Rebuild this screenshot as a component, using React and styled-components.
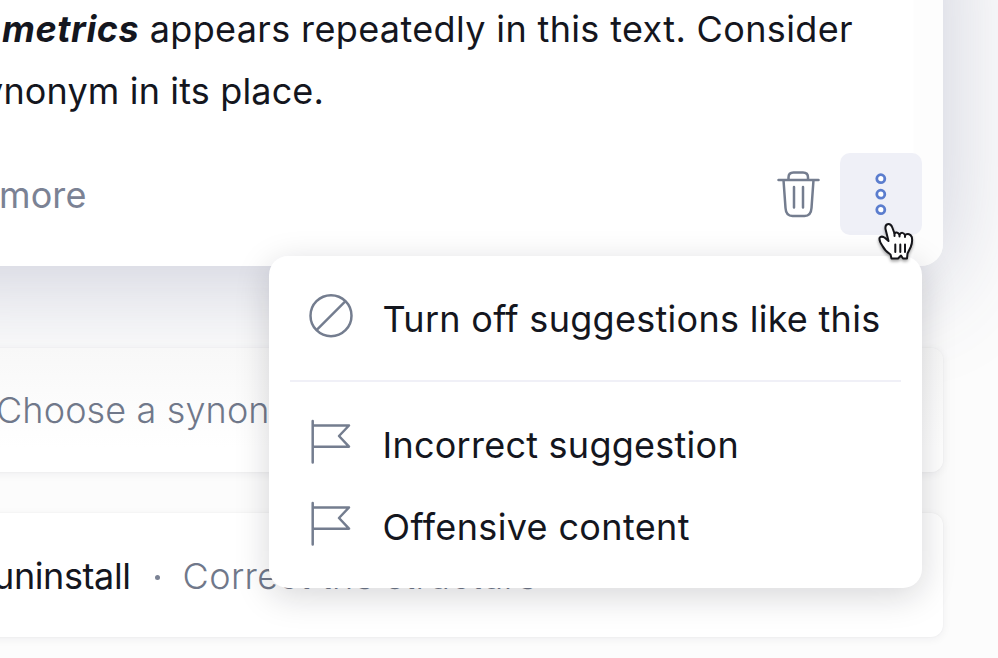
import React from "react";
import styled, { createGlobalStyle } from "styled-components";

const GlobalStyle = createGlobalStyle`
  * { box-sizing: border-box; }
  body { margin: 0; background: #fcfcfc; overflow: hidden; }
`;

const Page = styled.main`
  position: relative;
  width: 998px;
  height: 658px;
  overflow: hidden;
  background: #fcfcfc;
  font-family: Inter, "Liberation Sans", sans-serif;
  color: #14161e;
`;

/* The feed bleeds past the top and left of the window. */
const Feed = styled.div`
  display: flex;
  flex-direction: column;
  width: 1063px;
  margin: -120px 0 0 -120px;
`;

const SuggestionCard = styled.section`
  display: flex;
  flex-direction: column;
  height: 386px;
  padding: 120px 0 0 120px;
  background: linear-gradient(90deg, #fff 1033px, #fdfdfd 1034px);
  border-radius: 0 0 22px 0;
  box-shadow: 0 14px 108px rgba(60, 70, 118, 0.26);
`;

const Message = styled.p`
  display: flex;
  flex-direction: column;
  margin: 0;
  height: 153px;
`;

const Line = styled.span`
  display: block;
  height: 62px;
  line-height: 62px;
  margin-left: ${(p) => p.$shift}px;
  margin-top: ${(p) => p.$lift || 0}px;
  font-size: 36px;
  letter-spacing: ${(p) => p.$tracking}px;
  white-space: nowrap;
`;

const Word = styled.em`
  font-weight: 700;
  letter-spacing: ${(p) => p.$tracking}px;
`;

const Actions = styled.div`
  display: flex;
  align-items: center;
  height: 82px;
  padding-right: 21px;
`;

const MoreLink = styled.span`
  flex: 1;
  font-size: 36px;
  line-height: 44px;
  letter-spacing: 0.1px;
  margin-left: -1px;
  margin-top: 2px;
  color: #7b8294;
`;

const IconButton = styled.button`
  display: grid;
  place-items: center;
  width: 82px;
  height: 82px;
  padding: 0;
  border: 0;
  border-radius: 10px;
  background: ${(p) => (p.$active ? "#eff0f7" : "transparent")};
  color: ${(p) => (p.$active ? "#5b7dce" : "#747d8f")};
`;

const CollapsedCard = styled.section`
  display: flex;
  align-items: center;
  height: 124px;
  margin-top: ${(p) => p.$gap}px;
  padding: ${(p) => p.$drop || 0}px 0 0 120px;
  border-radius: 0 12px 12px 0;
  background: ${(p) => (p.$shaded ? "linear-gradient(#f8f8f8, #fff 80%)" : "#fff")};
  box-shadow: 0 2px 10px rgba(20, 24, 45, 0.06), 0 0 2px rgba(20, 24, 45, 0.05);
  font-size: 36px;
  white-space: nowrap;
`;

const Term = styled.span`
  margin-left: -7px;
  letter-spacing: -0.4px;
`;

const Dot = styled.span`
  width: 5px;
  height: 5px;
  margin: 2px 22px 0 24px;
  border-radius: 50%;
  background: #7b8294;
`;

const Hint = styled.span`
  margin-left: ${(p) => p.$shift || 0}px;
  font-weight: 300;
  letter-spacing: ${(p) => p.$tracking}px;
  color: #70788a;
`;

const Menu = styled.div`
  position: absolute;
  left: 269px;
  top: 256px;
  width: 653px;
  height: 332px;
  padding: 0 21px;
  border-radius: 19px;
  background: #fff;
  box-shadow: 0 8px 34px rgba(20, 20, 30, 0.17);
`;

const MenuItem = styled.div`
  display: flex;
  align-items: center;
  height: ${(p) => p.$height}px;
  padding-top: ${(p) => p.$drop || 0}px;
  padding-left: 18px;
  font-size: 36px;
  letter-spacing: ${(p) => p.$tracking}px;
  white-space: nowrap;

  svg { flex: none; margin-right: 28.5px; margin-top: -6px; }
`;

const Divider = styled.hr`
  width: 100%;
  height: 2px;
  margin: 0 0 22px;
  border: 0;
  background: #f0f0f7;
`;

const Pointer = styled.svg`
  position: absolute;
  left: 876px;
  top: 220px;
  filter: drop-shadow(0 2px 1.5px rgba(0, 0, 0, 0.35));
`;

const TrashIcon = () => (
  <svg width="46" height="50" viewBox="0 0 46 50" fill="none" stroke="currentColor" strokeWidth="2.5" strokeLinecap="round" strokeLinejoin="round">
    <path d="M2.500 11H42.500M12.500 11V8.500Q12.500 3.500 17.500 3.500H27Q32 3.500 32 8.500V11M7.500 11L9.500 39Q10 47 16.500 47H28.500Q35 47 35.500 39L37.500 11M18 18V38.500M27 18V38.500" />
  </svg>
);

const MoreIcon = () => (
  <svg width="14" height="44" viewBox="0 0 14 44" fill="#fff" stroke="currentColor" strokeWidth="2.8">
    <circle cx="6.800" cy="6.700" r="4" />
    <circle cx="6.800" cy="22.200" r="4" />
    <circle cx="6.800" cy="37.700" r="4" />
  </svg>
);

const BlockIcon = () => (
  <svg width="46" height="46" viewBox="0 0 46 46" fill="none" stroke="#747d8f" strokeWidth="2.5">
    <circle cx="23" cy="22.700" r="20.500" />
    <path d="M8.500 37.200L37.500 8.200" />
  </svg>
);

const FlagIcon = () => (
  <svg width="46" height="46" viewBox="0 0 46 46" fill="none" stroke="#747d8f" strokeWidth="2.500" strokeLinecap="round" strokeLinejoin="round">
    <path d="M4.700 2V43.500M4.700 6.500H41L31 17L41 27.700H4.700" />
  </svg>
);

export default function App() {
  return (
    <Page>
      <GlobalStyle />
      <Feed>
        <SuggestionCard>
          <Message>
            <Line $shift={2} $tracking={0.36} $lift={-2}>
              <Word $tracking={0.55}>metrics</Word> appears repeatedly in this text. Consider
            </Line>
            <Line $shift={-17} $tracking={0.15}>ynonym in its place.</Line>
          </Message>
          <Actions>
            <MoreLink>more</MoreLink>
            <IconButton aria-label="Dismiss"><TrashIcon /></IconButton>
            <IconButton $active aria-label="More options"><MoreIcon /></IconButton>
          </Actions>
        </SuggestionCard>
        <CollapsedCard $gap={82} $shaded>
          <Hint $shift={-4} $tracking={0.13}>Choose a synonym</Hint>
        </CollapsedCard>
        <CollapsedCard $gap={41} $drop={2}>
          <Term>uninstall</Term>
          <Dot />
          <Hint $shift={1} $tracking={0.4}>Correct the structure</Hint>
        </CollapsedCard>
      </Feed>
      <Menu role="menu">
        <MenuItem role="menuitem" $height={124} $drop={2} $tracking={0.28}><BlockIcon />Turn off suggestions like this</MenuItem>
        <Divider />
        <MenuItem role="menuitem" $height={82} $tracking={0.25}><FlagIcon />Incorrect suggestion</MenuItem>
        <MenuItem role="menuitem" $height={82} $tracking={0.36}><FlagIcon />Offensive content</MenuItem>
      </Menu>
      <Pointer width="40" height="44" viewBox="0 0 40 44" fill="#fff" stroke="#15151a" strokeWidth="2" strokeLinejoin="round" strokeLinecap="round">
        <path d="M15.500 38.500L14.500 34.500Q9 31 6.500 26Q3 21 3.500 18Q5 15.500 8.500 17.500L12.500 21L9.500 9Q9 5 11.500 4.200Q14.800 3.500 16.300 7.500L18.500 13.500Q20.500 11 23.500 14.500Q26.500 11 29 15Q33.500 12.500 35.800 17Q36.800 22 34.700 27L31.500 33.500L31 38.500H27L25 35.500L22 38.500Z" />
        <path d="M19.300 24.500V32M24.300 24.500V32M29 24.500V32M18.500 13.500V16M23.500 14.500V16.500M29 15V17" />
      </Pointer>
    </Page>
  );
}
